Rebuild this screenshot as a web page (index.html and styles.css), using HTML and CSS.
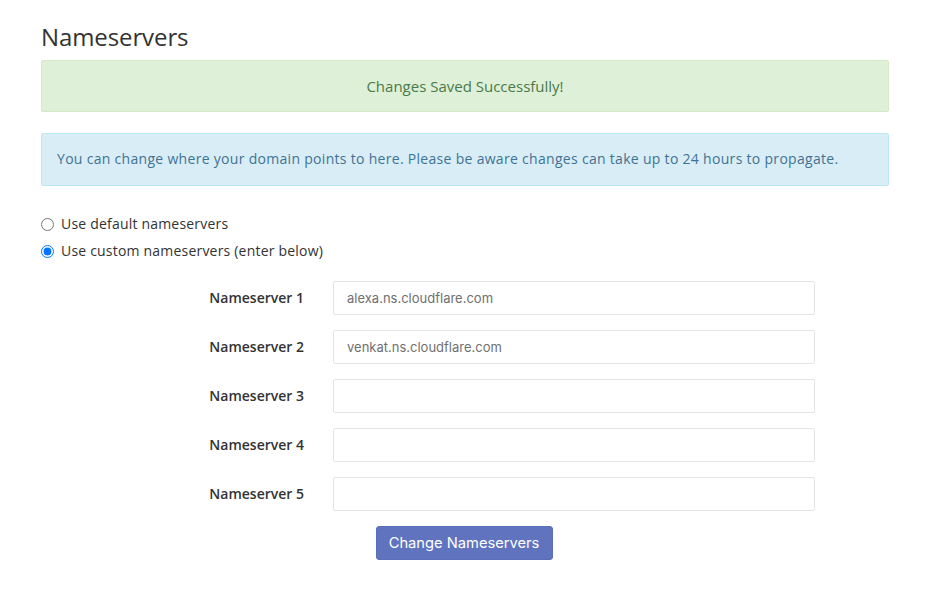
FILE: index.html
```html
<!DOCTYPE html>
<html>
<head>
<meta charset="utf-8">
<link rel="stylesheet" href="styles.css">
</head>
<body>
<div class="page">
  <h2 class="title">Nameservers</h2>
  <div class="alert alert-success">Changes Saved Successfully!</div>
  <div class="alert alert-info">You can change where your domain points to here. Please be aware changes can take up to 24 hours to propagate.</div>
  <div class="radios">
    <label class="radio"><input type="radio" name="ns"> Use default nameservers</label>
    <label class="radio"><input type="radio" name="ns" checked> Use custom nameservers (enter below)</label>
  </div>
  <form class="ns-form">
    <div class="row"><label class="lbl">Nameserver 1</label><input class="field" type="text" value="alexa.ns.cloudflare.com"></div>
    <div class="row"><label class="lbl">Nameserver 2</label><input class="field" type="text" value="venkat.ns.cloudflare.com"></div>
    <div class="row"><label class="lbl">Nameserver 3</label><input class="field" type="text"></div>
    <div class="row"><label class="lbl">Nameserver 4</label><input class="field" type="text"></div>
    <div class="row"><label class="lbl">Nameserver 5</label><input class="field" type="text"></div>
    <div class="actions"><button type="button" class="btn">Change Nameservers</button></div>
  </form>
</div>
</body>
</html>
```
FILE: styles.css
```css
* { box-sizing: border-box; }
html, body { margin: 0; padding: 0; background: #fff; }
body {
  font-family: "Open Sans", "Liberation Sans", sans-serif;
  font-size: 14px;
  line-height: 20px;
  color: #333;
}
.page {
  width: 848px;
  margin-left: 41px;
  padding-top: 22px;
}
.title {
  font-size: 24px;
  font-weight: 400;
  line-height: 30px;
  margin: 0 0 8px 0;
  color: #333;
  letter-spacing: -0.1px;
}
.alert {
  border: 1px solid transparent;
  border-radius: 2px;
  padding: 15px;
  margin-bottom: 21px;
}
.alert-success {
  background: #dff0d8;
  border-color: #d6e9c6;
  color: #4a7a4a;
  text-align: center;
  font-size: 15px;
}
.alert-info {
  background: #d9edf7;
  border-color: #bce8f1;
  color: #3f7394;
  padding: 15px 15px 16px 15px;
  letter-spacing: 0.3px;
}
.radios {
  display: flex;
  flex-direction: column;
  gap: 7px;
  margin-top: 28px;
}
.radio {
  display: flex;
  align-items: center;
  gap: 7px;
  color: #333;
  letter-spacing: 0.2px;
}
.radio input {
  margin: 0;
  width: 13px;
  height: 13px;
  accent-color: #0075ff;
}
.ns-form {
  margin-top: 20px;
}
.row {
  display: grid;
  grid-template-columns: 263px 482px;
  column-gap: 29px;
  align-items: center;
  margin-bottom: 15px;
}
.lbl {
  text-align: right;
  font-weight: 600;
  color: #333;
}
.field {
  height: 34px;
  border: 1px solid #e5e5e5;
  border-radius: 2px;
  padding: 0 13px;
  font-family: "Inter", "Open Sans", sans-serif;
  font-size: 13px;
  color: #707070;
  background: #fff;
  outline: none;
}
.actions {
  display: flex;
  justify-content: center;
  padding-right: 2px;
}
.btn {
  width: 177px;
  height: 34px;
  background: #5f73bf;
  border: 1px solid #5a6eba;
  border-radius: 3px;
  color: #fff;
  font-family: "Inter", "Open Sans", sans-serif;
  font-size: 14.7px;
  padding: 0;
}
```
